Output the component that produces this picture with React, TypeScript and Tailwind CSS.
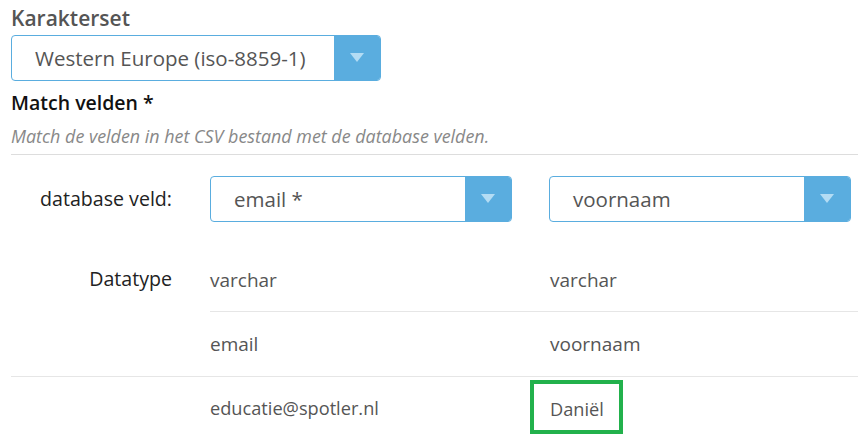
import React from "react";

function Caret() {
  return (
    <svg width="14" height="10" viewBox="0 0 14 10">
      <polygon points="0,0 14,0 7,9" fill="#b3dcf4" />
    </svg>
  );
}

function Select({ value, w, size }: { value: string; w: string; size: string }) {
  return (
    <div className={`flex h-[46px] ${w} rounded-[4px] border border-[#5aaddf] bg-white overflow-hidden`}>
      <div className={`flex-1 flex items-center pl-[23px] ${size} text-[#555]`}>{value}</div>
      <div className="w-[46px] bg-[#5aaddf] flex items-center justify-center">
        <Caret />
      </div>
    </div>
  );
}

export default function App() {
  return (
    <div
      className="w-[863px] h-[437px] bg-white overflow-hidden pl-[11px] pr-[5px] pt-[4px]"
      style={{ fontFamily: '"Open Sans", sans-serif' }}
    >
      <div className="text-[21px] font-semibold text-[#555] leading-[28px]">Karakterset</div>
      <div className="mt-[3px]">
        <Select value="Western Europe (iso-8859-1)" w="w-[370px]" size="text-[20.5px]" />
      </div>
      <div className="mt-[8px] text-[19.5px] font-semibold text-[#111] leading-[28px]">Match velden *</div>
      <div className="mt-[7px] text-[17.9px] italic text-[#888] leading-[24px]">
        Match de velden in het CSV bestand met de database velden.
      </div>
      <div className="mt-[6px] border-t border-[#ddd]" />

      <div className="flex pt-[21px] h-[94px] items-start">
        <div className="w-[161px] text-right text-[19.6px] text-[#222] h-[46px] leading-[46px]">database veld:</div>
        <div className="ml-[38px] w-[339px]">
          <Select value="email *" w="w-[302px]" size="text-[20.5px]" />
        </div>
        <div>
          <Select value="voornaam" w="w-[302px]" size="text-[20.5px]" />
        </div>
      </div>

      <div className="flex">
        <div className="w-[161px] text-right text-[19.6px] text-[#222] pt-[17px] leading-[26px]">Datatype</div>
        <div className="ml-[38px] flex-1">
          <div className="flex h-[63px] items-center border-b border-[#e6e6e6] text-[19px] text-[#555]">
            <div className="w-[339px]">varchar</div>
            <div className="pl-[1px]">varchar</div>
          </div>
          <div className="flex h-[64px] items-center text-[19px] text-[#555]">
            <div className="w-[339px]">email</div>
            <div className="pl-[1px]">voornaam</div>
          </div>
        </div>
      </div>
      <div className="flex border-t border-[#e6e6e6] h-[64px] items-center text-[18.2px] text-[#555]">
        <div className="ml-[199px] w-[339px]">educatie@spotler.nl</div>
        <div className="relative pl-[1px] leading-[26px]">
          Daniël
          <div className="absolute left-[-19px] top-[-16px] w-[93px] h-[54px] border-4 border-[#22b14c]" />
        </div>
      </div>
    </div>
  );
}
